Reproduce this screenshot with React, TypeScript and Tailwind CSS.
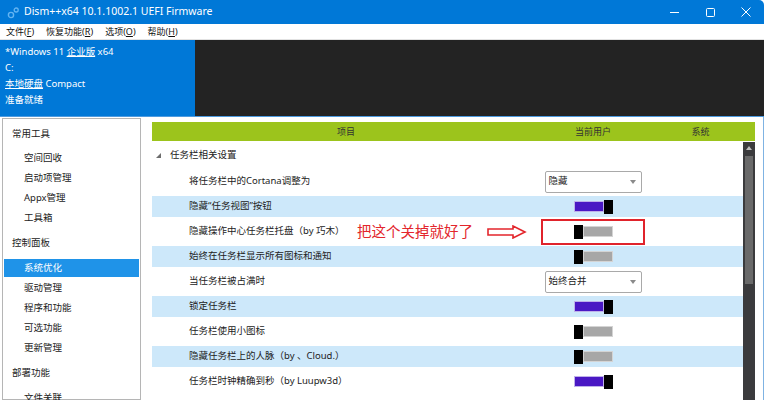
import { ReactNode } from 'react';

type Row = {
  label: string;
  kind: 'combo' | 'on' | 'off';
  value?: string;
  note?: boolean;
};

const rows: Row[] = [
  { label: '将任务栏中的Cortana调整为', kind: 'combo', value: '隐藏' },
  { label: '隐藏“任务视图”按钮', kind: 'on' },
  { label: '隐藏操作中心任务栏托盘（by 巧木）', kind: 'off', note: true },
  { label: '始终在任务栏显示所有图标和通知', kind: 'off' },
  { label: '当任务栏被占满时', kind: 'combo', value: '始终合并' },
  { label: '锁定任务栏', kind: 'on' },
  { label: '任务栏使用小图标', kind: 'off' },
  { label: '隐藏任务栏上的人脉（by 、Cloud.）', kind: 'off' },
  { label: '任务栏时钟精确到秒（by Luupw3d）', kind: 'on' },
];

const sidebar: { label: string; header?: boolean; active?: boolean }[] = [
  { label: '常用工具', header: true },
  { label: '空间回收' },
  { label: '启动项管理' },
  { label: 'Appx管理' },
  { label: '工具箱' },
  { label: '控制面板', header: true },
  { label: '系统优化', active: true },
  { label: '驱动管理' },
  { label: '程序和功能' },
  { label: '可选功能' },
  { label: '更新管理' },
  { label: '部署功能', header: true },
  { label: '文件关联' },
];

function Toggle({ on }: { on: boolean }) {
  const knob = <div className="h-[14px] w-[9px] bg-black" />;
  return (
    <div className="flex h-[14px] w-[39px] items-center">
      {!on && knob}
      <div
        className={
          on
            ? 'h-[11px] flex-1 border border-[#bfb1ea] bg-[#4a18c4]'
            : 'h-[11px] flex-1 border border-[#d4d4d4] bg-[#a7a7a7]'
        }
      />
      {on && knob}
    </div>
  );
}

function Combo({ value }: { value: string }) {
  return (
    <div className="flex h-[22px] w-[97px] items-center justify-between rounded-[2px] border border-[#a9a9a9] bg-white pl-[3px] pr-[5px] text-[9.5px] text-[#222]">
      <span>{value}</span>
      <svg width="6" height="4" viewBox="0 0 6 4">
        <polygon points="0,0 6,0 3,4" fill="#8a8a8a" />
      </svg>
    </div>
  );
}

function MenuItem({ name, k }: { name: string; k: string }) {
  return (
    <span>
      {name}(<span className="underline">{k}</span>)
    </span>
  );
}

function SettingRow({ row, index }: { row: Row; index: number }) {
  const striped = index % 2 === 1;
  let control: ReactNode = null;
  if (row.kind === 'combo') control = <Combo value={row.value ?? ''} />;
  else control = <Toggle on={row.kind === 'on'} />;

  return (
    <div className="h-[25px] py-[2px]">
      <div className={`flex h-full items-center ${striped ? 'bg-[#cde8fa]' : ''}`}>
        <div className="relative flex h-full w-[388px] items-center pl-[37px] text-[9.5px] text-[#222]">
          {row.label}
          {row.note && (
            <div className="absolute left-[205px] top-[-2px] flex h-[25px] items-center gap-[14px]">
              <span className="text-[14.5px] text-[#e3262c]">把这个关掉就好了</span>
              <svg width="40" height="14" viewBox="0 0 40 14">
                <polygon
                  points="1,4 26,4 26,1 38,7 26,13 26,10 1,10"
                  fill="white"
                  stroke="#e3262c"
                  strokeWidth="1.6"
                  strokeLinejoin="miter"
                />
              </svg>
            </div>
          )}
        </div>
        <div className="relative flex h-full w-[106px] items-center justify-center">
          {control}
          {row.note && (
            <div className="absolute left-[1px] right-[1px] top-[-2px] h-[26px] border-[2.5px] border-[#e0232b]" />
          )}
        </div>
        <div className="flex-1" />
      </div>
    </div>
  );
}

export default function App() {
  return (
    <div className="relative h-[400px] w-[768px] overflow-hidden bg-white font-['Noto_Sans','Noto_Sans_CJK_SC',sans-serif]">
      <div className="flex h-full w-[764px] flex-col overflow-hidden rounded-tr-[5px]">
        {/* title bar */}
        <div className="flex h-[24px] shrink-0 items-center bg-[#0078d7] text-white">
          <svg className="ml-[7px]" width="13" height="13" viewBox="0 0 13 13">
            <circle cx="4" cy="9" r="2.6" fill="none" stroke="#63b4f2" strokeWidth="1.4" />
            <circle cx="9.2" cy="4" r="2" fill="none" stroke="#63b4f2" strokeWidth="1.3" />
          </svg>
          <span className="ml-[4px] text-[10.5px]">Dism++x64 10.1.1002.1 UEFI Firmware</span>
          <div className="ml-auto flex h-full items-center">
            <div className="flex h-full w-[36px] items-center justify-center">
              <div className="h-[1px] w-[9px] bg-white" />
            </div>
            <div className="flex h-full w-[36px] items-center justify-center">
              <div className="h-[9px] w-[9px] rounded-[1.5px] border border-white" />
            </div>
            <div className="flex h-full w-[36px] items-center justify-center">
              <svg width="10" height="10" viewBox="0 0 10 10">
                <path d="M0.5 0.5 L9.5 9.5 M9.5 0.5 L0.5 9.5" stroke="white" strokeWidth="1" />
              </svg>
            </div>
          </div>
        </div>

        {/* menu */}
        <div className="flex h-[16px] shrink-0 items-center gap-[12px] border-b border-[#e2e2e2] bg-white pl-[6px] text-[9px] text-[#111]">
          <MenuItem name="文件" k="F" />
          <MenuItem name="恢复功能" k="R" />
          <MenuItem name="选项" k="O" />
          <MenuItem name="帮助" k="H" />
        </div>

        {/* image info */}
        <div className="flex h-[76px] shrink-0">
          <div className="w-[195px] bg-[#0078d7] pl-[5px] pt-[4px] text-[9.5px] leading-[16px] text-white">
            <div>
              *Windows 11 <span className="underline">企业版</span> x64
            </div>
            <div>C:</div>
            <div>
              <span className="underline">本地硬盘</span> Compact
            </div>
            <div>准备就绪</div>
          </div>
          <div className="flex-1 bg-[#232323]" />
        </div>
        <div className="h-[1px] shrink-0 bg-[#4d9be0]" />

        {/* body */}
        <div className="flex min-h-0 flex-1 border-r border-[#7fb3e3]">
          <div className="ml-[2px] mt-[1px] w-[139px] shrink-0 border border-[#b5b5b5] bg-white pt-[1px] text-[9.5px] text-[#222]">
            {sidebar.map((item, i) => {
              if (item.header)
                return (
                  <div
                    key={item.label}
                    className={`flex items-center pl-[9px] ${i === 0 ? 'h-[28px]' : 'h-[30px]'}`}
                  >
                    {item.label}
                  </div>
                );
              return (
                <div key={item.label} className="flex h-[20px] items-center px-[1px]">
                  <div
                    className={`flex h-[18px] w-full items-center pl-[20px] ${
                      item.active ? 'bg-[#1f93e8] text-white' : ''
                    }`}
                  >
                    {item.label}
                  </div>
                </div>
              );
            })}
          </div>

          <div className="flex min-w-0 flex-1 flex-col pl-[11px] pr-[8px] pt-[5px]">
            <div className="flex h-[19px] shrink-0 items-center bg-[#9cc41c] text-[9px] text-[#333]">
              <div className="w-[388px] text-center">项目</div>
              <div className="w-[106px] text-center">当前用户</div>
              <div className="flex-1 text-center">系统</div>
            </div>
            <div className="flex min-h-0 flex-1">
              <div className="min-w-0 flex-1">
                <div className="flex h-[28px] items-center text-[9.5px] text-[#222]">
                  <svg className="ml-[4px]" width="5" height="5" viewBox="0 0 5 5">
                    <polygon points="5,0 5,5 0,5" fill="#6d6d6d" />
                  </svg>
                  <span className="ml-[9px]">任务栏相关设置</span>
                </div>
                {rows.map((row, i) => (
                  <SettingRow key={row.label} row={row} index={i} />
                ))}
              </div>
              <div className="relative mt-[1px] w-[12px] shrink-0 bg-[#3b3b3d]">
                <svg className="absolute left-[3px] top-[4px]" width="6" height="4" viewBox="0 0 6 4">
                  <polygon points="3,0 6,4 0,4" fill="#bdbdbd" />
                </svg>
                <div className="absolute left-[2px] right-[2px] top-[14px] h-[128px] bg-[#6a6a6a]" />
              </div>
            </div>
          </div>
        </div>
      </div>
    </div>
  );
}
